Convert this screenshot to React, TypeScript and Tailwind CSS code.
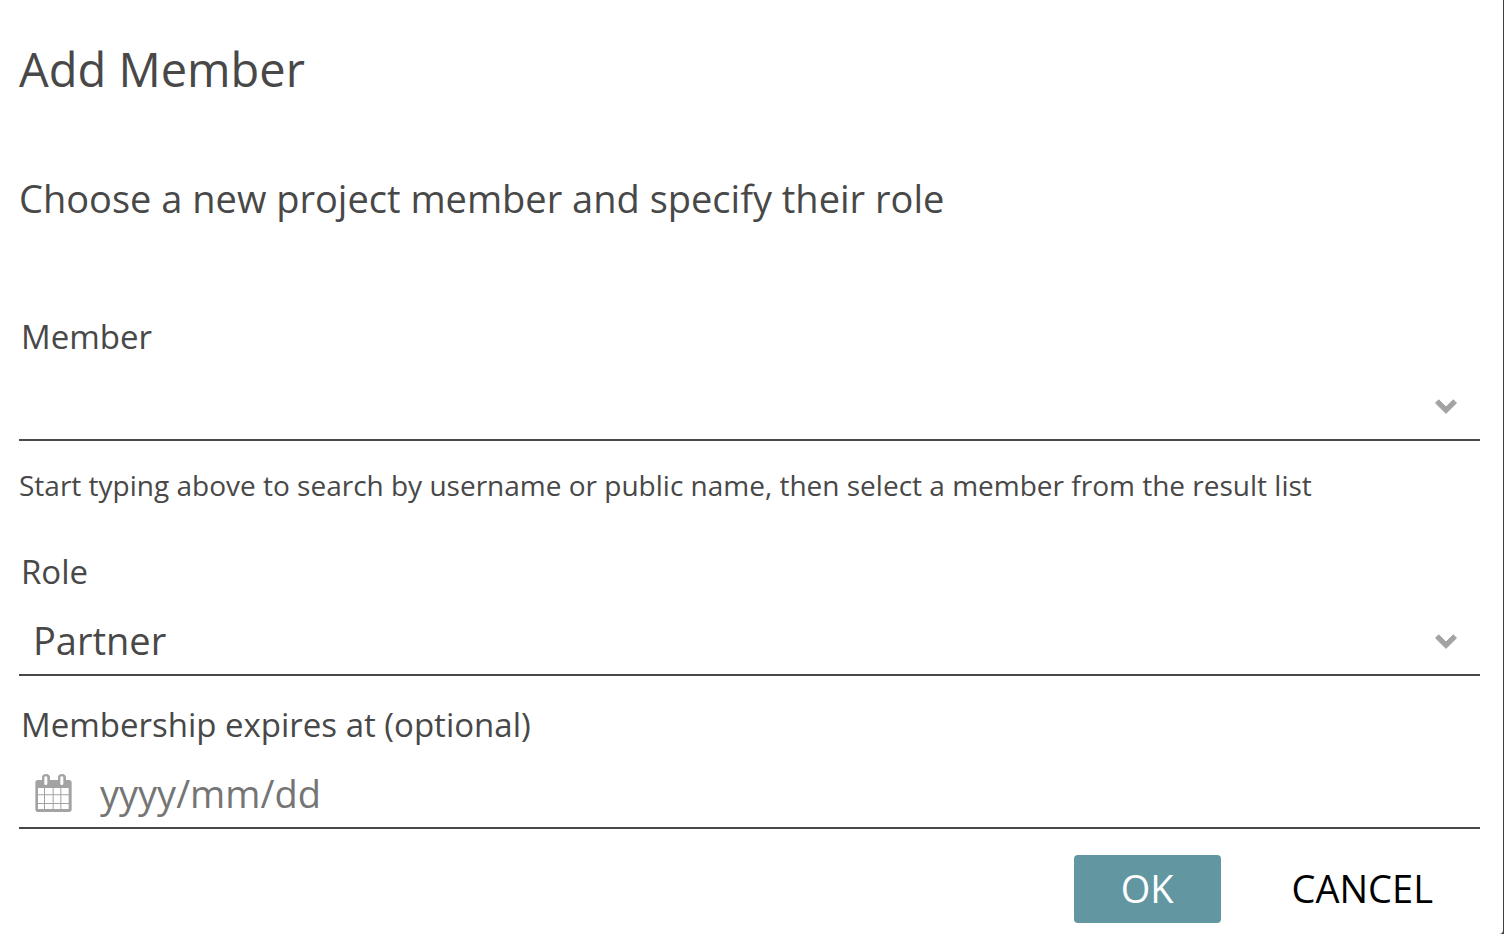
function Chevron() {
  return (
    <svg aria-hidden="true" viewBox="0 0 24 21" className="pointer-events-none col-start-1 row-start-1 mr-[22px] h-[21px] w-6 self-center justify-self-end" fill="#a3a3a3" stroke="#a3a3a3" strokeWidth="1" strokeLinejoin="round">
      <path d="M12 19.400 1.500 9 4.700 5.800 12 13l7.300-7.200L22.500 9z" />
    </svg>
  );
}

function CalendarIcon() {
  return (
    <svg aria-hidden="true" viewBox="-1 -3 111 117" className="h-[39px] w-[37px] shrink-0" fill="#a3a3a3">
      <path
        fillRule="evenodd"
        d="M8 18H20V11Q20 0 32 0Q44 0 44 11V18H68V11Q68 0 80 0Q92 0 92 11V18H101Q109 18 109 26V106Q109 114 101 114H8Q0 114 0 106V26Q0 18 8 18Z
        M27 11V29Q27 33 31.500 33Q36 33 36 29V11Q36 7 31.500 7Q27 7 27 11Z
        M75 11V29Q75 33 79.500 33Q84 33 84 29V11Q84 7 79.500 7Q75 7 75 11Z
        M8 42H26V61H8Z M29 42H52V61H29Z M55 42H75V61H55Z M78 42H100V61H78Z
        M8 64H26V87H8Z M29 64H52V87H29Z M55 64H75V87H55Z M78 64H100V87H78Z
        M8 90H26V105H8Z M29 90H52V105H29Z M55 90H75V105H55Z M78 90H100V105H78Z"
      />
    </svg>
  );
}

export default function App() {
  return (
    <div className="bg-[#3f3f3f] pr-px font-['Open_Sans',sans-serif] text-[#484848]">
      <main className="min-h-screen rounded-br bg-white pr-[23px] pl-[19px]">
        <form onSubmit={(event) => event.preventDefault()}>
          <h1 className="pt-9 text-[47px] leading-[67px]">Add Member</h1>
          <p className="pt-[68px] text-[38px] leading-[54px]">Choose a new project member and specify their role</p>

          <div className="mt-[87px]">
            <label htmlFor="member" className="block pl-[2px] text-[33px] leading-[50px]">Member</label>
            <div className="mt-2 grid border-b-2 border-[#484848]">
              <input id="member" type="text" role="combobox" aria-expanded="false" className="col-start-1 row-start-1 h-[69px] w-full bg-transparent pr-16 pl-[14px] text-[38px] outline-none" />
              <Chevron />
            </div>
            <p className="mt-6 text-[28px] leading-[40px]">Start typing above to search by username or public name, then select a member from the result list</p>
          </div>

          <div className="mt-[42px]">
            <label htmlFor="role" className="block pl-[2px] text-[33px] leading-[50px]">Role</label>
            <div className="mt-2 grid border-b-2 border-[#484848]">
              <select id="role" className="col-start-1 row-start-1 h-[69px] w-full appearance-none bg-transparent pt-[2px] pr-16 pl-[14px] text-[38px] outline-none">
                <option>Partner</option>
              </select>
              <Chevron />
            </div>
          </div>

          <div className="mt-6">
            <label htmlFor="expires" className="block pl-[2px] text-[33px] leading-[50px]">Membership expires at (optional)</label>
            <div className="mt-2 flex items-center gap-7 border-b-2 border-[#484848] pl-4">
              <CalendarIcon />
              <input id="expires" type="text" placeholder="yyyy/mm/dd" className="h-[69px] min-w-0 flex-1 bg-transparent text-[38px] outline-none placeholder:text-[#757575]" />
            </div>
          </div>

          <div className="flex justify-end gap-6 pt-[26px] text-[38px]">
            <button type="submit" className="h-[68px] rounded bg-[#6297a1] px-[47px] pb-[2px] text-white">OK</button>
            <button type="button" className="h-[68px] px-[47px] pb-[2px] text-black">CANCEL</button>
          </div>
        </form>
      </main>
    </div>
  );
}
